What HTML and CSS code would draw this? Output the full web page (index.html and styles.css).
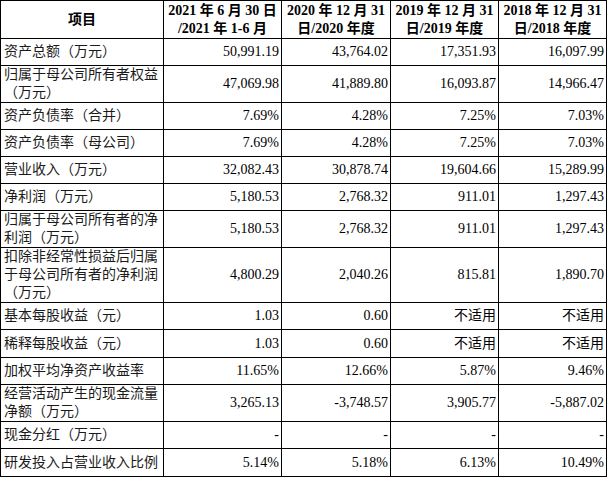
FILE: index.html
```html
<!DOCTYPE html>
<html lang="zh-CN">
<head>
<meta charset="utf-8">
<title>主要财务数据</title>
<link rel="stylesheet" href="styles.css">
</head>
<body>
<table class="fin">
  <colgroup>
    <col class="c-label">
    <col class="c-2021">
    <col class="c-2020">
    <col class="c-2019">
    <col class="c-2018">
  </colgroup>
  <thead>
    <tr>
      <th>项目</th>
      <th>2021 年 6 月 30 日<br>/2021 年 1-6 月</th>
      <th>2020 年 12 月 31<br>日/2020 年度</th>
      <th>2019 年 12 月 31<br>日/2019 年度</th>
      <th>2018 年 12 月 31<br>日/2018 年度</th>
    </tr>
  </thead>
  <tbody>
    <tr><td class="label">资产总额（万元）</td><td>50,991.19</td><td>43,764.02</td><td>17,351.93</td><td>16,097.99</td></tr>
    <tr><td class="label">归属于母公司所有者权益<br>（万元）</td><td>47,069.98</td><td>41,889.80</td><td>16,093.87</td><td>14,966.47</td></tr>
    <tr><td class="label">资产负债率（合并）</td><td>7.69%</td><td>4.28%</td><td>7.25%</td><td>7.03%</td></tr>
    <tr><td class="label">资产负债率（母公司）</td><td>7.69%</td><td>4.28%</td><td>7.25%</td><td>7.03%</td></tr>
    <tr><td class="label">营业收入（万元）</td><td>32,082.43</td><td>30,878.74</td><td>19,604.66</td><td>15,289.99</td></tr>
    <tr><td class="label">净利润（万元）</td><td>5,180.53</td><td>2,768.32</td><td>911.01</td><td>1,297.43</td></tr>
    <tr><td class="label">归属于母公司所有者的净<br>利润（万元）</td><td>5,180.53</td><td>2,768.32</td><td>911.01</td><td>1,297.43</td></tr>
    <tr><td class="label">扣除非经常性损益后归属<br>于母公司所有者的净利润<br>（万元）</td><td>4,800.29</td><td>2,040.26</td><td>815.81</td><td>1,890.70</td></tr>
    <tr><td class="label">基本每股收益（元）</td><td>1.03</td><td>0.60</td><td>不适用</td><td>不适用</td></tr>
    <tr class="tall"><td class="label">稀释每股收益（元）</td><td>1.03</td><td>0.60</td><td>不适用</td><td>不适用</td></tr>
    <tr><td class="label">加权平均净资产收益率</td><td>11.65%</td><td>12.66%</td><td>5.87%</td><td>9.46%</td></tr>
    <tr><td class="label">经营活动产生的现金流量<br>净额（万元）</td><td>3,265.13</td><td>-3,748.57</td><td>3,905.77</td><td>-5,887.02</td></tr>
    <tr><td class="label">现金分红（万元）</td><td>-</td><td>-</td><td>-</td><td>-</td></tr>
    <tr class="tall"><td class="label">研发投入占营业收入比例</td><td>5.14%</td><td>5.18%</td><td>6.13%</td><td>10.49%</td></tr>
  </tbody>
</table>
</body>
</html>
```

FILE: styles.css
```css
html, body {
  margin: 0;
  padding: 0;
  background: #fff;
}

.fin {
  border-collapse: collapse;
  table-layout: fixed;
  width: 606px;
  font-family: "Liberation Serif", "Noto Sans CJK SC", serif;
  font-size: 14px;
  line-height: 18px;
  color: #000;
}

.c-label { width: 163px; }
.c-2021 { width: 118px; }
.c-2020 { width: 109px; }
.c-2019 { width: 108px; }
.c-2018 { width: 108px; }

.fin th,
.fin td {
  border: 1px solid #000;
  padding: 0 2px 0 3px;
  vertical-align: middle;
}

.fin thead tr {
  height: 38px;
}

.fin th {
  font-weight: bold;
  text-align: center;
  padding: 0 1px;
  white-space: nowrap;
}

.fin tbody tr {
  height: 27px;
}

.fin tbody tr.tall {
  height: 28px;
}

.fin td {
  text-align: right;
  white-space: nowrap;
}

.fin td.label {
  text-align: left;
  color: #1a1a1a;
}
```
